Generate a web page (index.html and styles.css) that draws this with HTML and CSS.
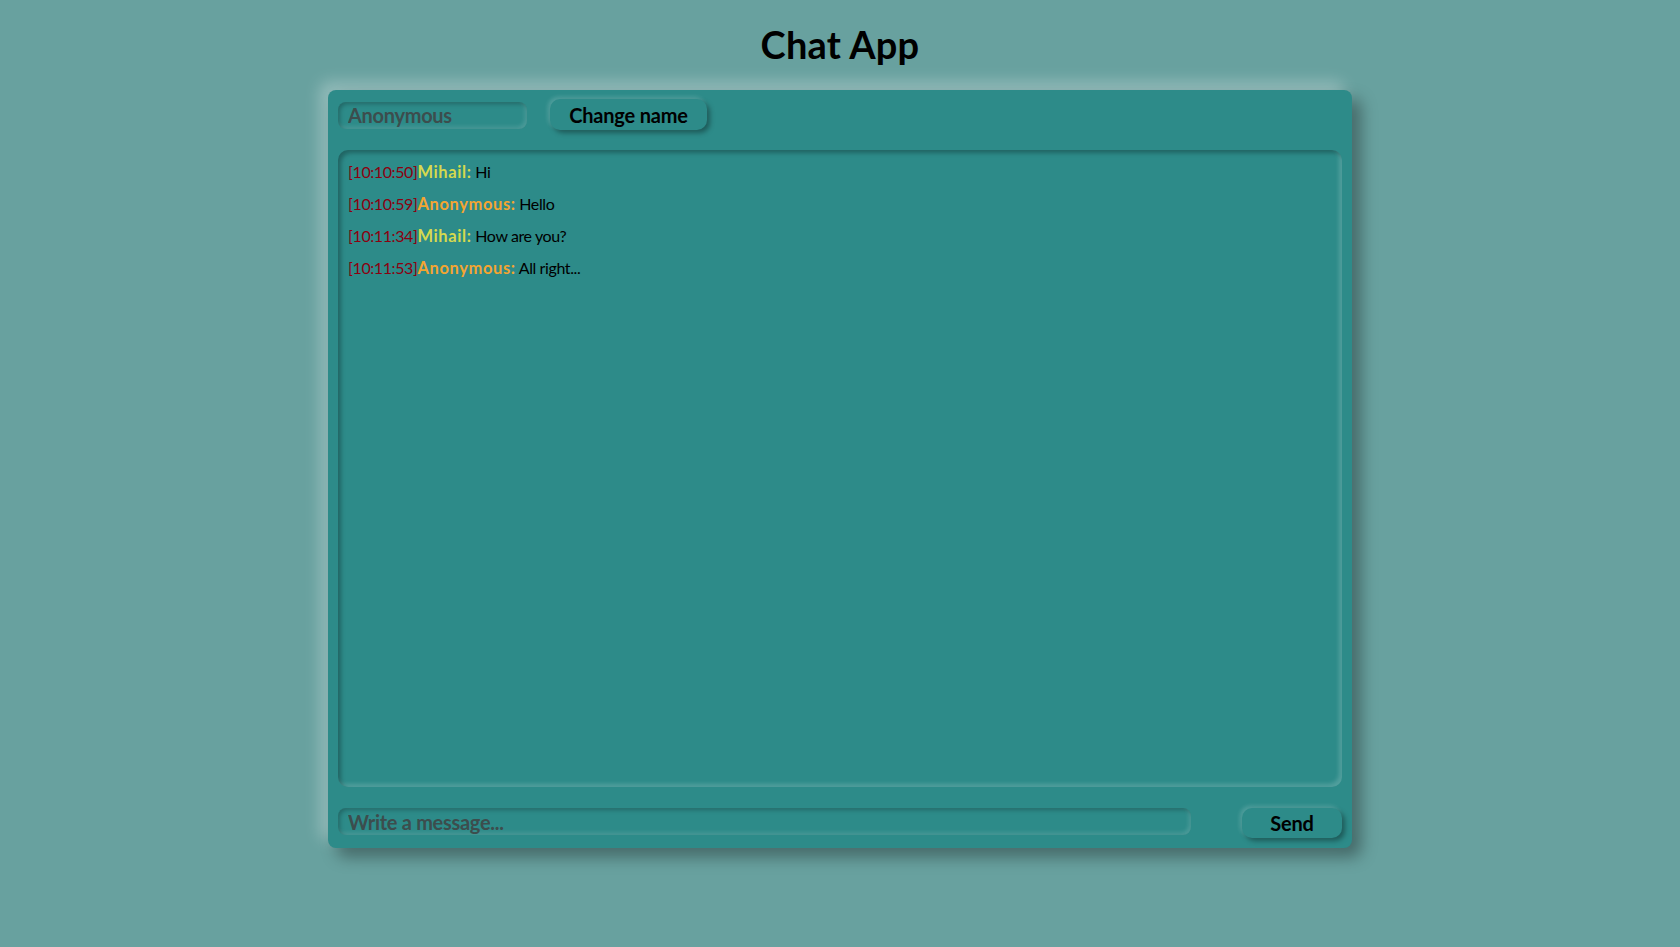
FILE: index.html
```html
<!DOCTYPE html>
<html lang="en">
<head>
<meta charset="utf-8">
<title>Chat App</title>
<link rel="stylesheet" href="styles.css">
</head>
<body>
<h1 class="title">Chat App</h1>
<div class="chat">
  <div class="top-row">
    <input class="field name-field" type="text" placeholder="Anonymous">
    <button class="btn change-btn">Change name</button>
  </div>
  <div class="messages">
    <div class="msg"><span class="time">[10:10:50]</span><span class="user user-mihail">Mihail:</span> Hi</div>
    <div class="msg"><span class="time">[10:10:59]</span><span class="user user-anon">Anonymous:</span> Hello</div>
    <div class="msg"><span class="time">[10:11:34]</span><span class="user user-mihail">Mihail:</span> How are you?</div>
    <div class="msg"><span class="time">[10:11:53]</span><span class="user user-anon">Anonymous:</span> All right...</div>
  </div>
  <div class="bottom-row">
    <input class="field msg-field" type="text" placeholder="Write a message...">
    <button class="btn send-btn">Send</button>
  </div>
</div>
</body>
</html>
```
FILE: styles.css
```css
html, body {
  margin: 0;
  padding: 0;
}
body {
  background: #68a19f;
  font-family: "Lato", "Open Sans", sans-serif;
  color: #000;
  height: 947px;
  overflow: hidden;
}
.title {
  margin: 0;
  height: 90px;
  box-sizing: border-box;
  padding-top: 22px;
  text-align: center;
  font-size: 38px;
  line-height: 44px;
  font-weight: 700;
  letter-spacing: 0.2px;
}
.chat {
  width: 1024px;
  height: 758px;
  margin: 0 auto;
  box-sizing: border-box;
  padding: 9px 10px 10px;
  background: #2d8b89;
  border-radius: 8px;
  display: flex;
  flex-direction: column;
  box-shadow: 9px 9px 16px rgba(0, 0, 0, 0.35), -8px -8px 16px rgba(255, 255, 255, 0.3);
}
.top-row {
  display: flex;
  align-items: center;
  gap: 23px;
  height: 31px;
}
.bottom-row {
  display: flex;
  align-items: flex-start;
  gap: 51px;
  height: 30px;
  margin-top: 21px;
}
.field {
  box-sizing: border-box;
  height: 27px;
  border: none;
  outline: none;
  border-radius: 8px;
  background: #2d8b89;
  padding: 0 10px;
  font-family: inherit;
  font-size: 20px;
  font-weight: 700;
  letter-spacing: -0.3px;
  color: #1b2b2b;
  box-shadow: inset 2px 2px 4px rgba(0, 0, 0, 0.25), inset -2px -2px 4px rgba(255, 255, 255, 0.16);
}
.field::placeholder {
  color: #3c4d4d;
}
.name-field {
  width: 189px;
  margin-top: 1px;
}
.msg-field {
  width: 853px;
}
.btn {
  box-sizing: border-box;
  border: none;
  border-radius: 10px;
  background: #2d8b89;
  font-family: inherit;
  font-size: 20px;
  font-weight: 700;
  letter-spacing: -0.2px;
  color: #000;
  padding: 0;
  cursor: pointer;
  box-shadow: 3px 3px 5px rgba(0, 0, 0, 0.35), -2px -2px 4px rgba(255, 255, 255, 0.18);
}
.change-btn {
  width: 157px;
  height: 31px;
}
.send-btn {
  width: 100px;
  height: 30px;
}
.messages {
  margin-top: 20px;
  flex: 1;
  border-radius: 10px;
  box-sizing: border-box;
  padding: 12px 10px 10px;
  display: flex;
  flex-direction: column;
  gap: 12px;
  box-shadow: inset 3px 3px 4px rgba(0, 0, 0, 0.28), inset -3px -3px 4px rgba(255, 255, 255, 0.18);
}
.msg {
  font-size: 16px;
  line-height: 20px;
  letter-spacing: -0.4px;
  color: #000;
}
.time {
  color: #8b0010;
}
.user {
  font-weight: 700;
  font-size: 16.5px;
  letter-spacing: 0.6px;
}
.user-mihail {
  color: #d6d94e;
}
.user-anon {
  color: #f4a531;
}
```
